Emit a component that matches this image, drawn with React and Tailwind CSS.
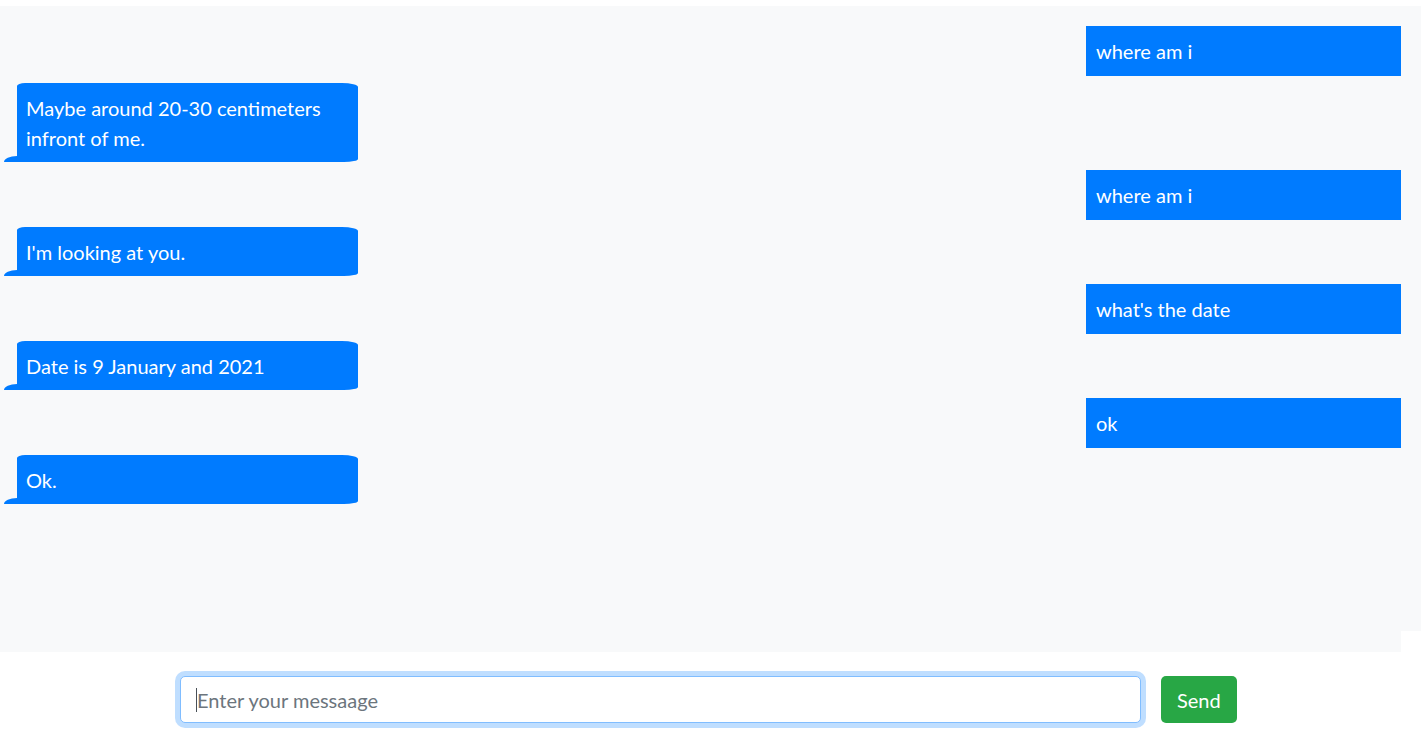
import { useState } from "react";

const messages = [
  { id: 1, from: "user", text: "where am i" },
  { id: 2, from: "bot", text: "Maybe around 20-30 centimeters infront of me." },
  { id: 3, from: "user", text: "where am i" },
  { id: 4, from: "bot", text: "I'm looking at you." },
  { id: 5, from: "user", text: "what's the date" },
  { id: 6, from: "bot", text: "Date is 9 January and 2021" },
  { id: 7, from: "user", text: "ok" },
  { id: 8, from: "bot", text: "Ok." },
];

const font = { fontFamily: '"Lato", "Open Sans", sans-serif' };

const App = () => {
  const [text, setText] = useState("");

  return (
    <div className="min-h-screen bg-white pt-[6px] font-['Lato',sans-serif]">

      {/* Chat area */}
      <div className="w-[1401px] h-[646px] bg-[#f8f9fa]">
        <div className="w-[1421px] h-[625px] bg-[#f8f9fa] pt-[20px] flex flex-col">

          {messages.map((msg) =>
            msg.from === "user" ? (
              <div key={msg.id} className="flex justify-end pr-[20px] mb-[7px]">
                <div className="w-[315px] bg-[#007bff] text-white text-[20px] leading-[30px] px-[10px] py-[10px]">
                  {msg.text}
                </div>
              </div>
            ) : (
              <div key={msg.id} className="flex pl-[17px] mb-[8px]">
                <div className="relative w-[341px] bg-[#007bff] text-white text-[20px] leading-[30px] pl-[9px] pr-[10px] pt-[10px] pb-[9px] rounded-tl-[8px_3px] rounded-tr-[16px_4px] rounded-br-[14px_3px]">
                  {msg.text}
                  <span className="absolute left-[-13px] bottom-0 w-[14px] h-[6px] bg-[#007bff] rounded-tl-[13px_6px]"></span>
                </div>
              </div>
            )
          )}

        </div>
      </div>

      {/* Input row */}
      <div className="flex items-center pl-[180px] pt-[24px] gap-[20px]">
        <div className="relative">
          <input
            type="text"
            value={text}
            onChange={(e) => setText(e.target.value)}
            placeholder="Enter your messaage"
            className="w-[961px] h-[47px] px-[16px] text-[20px] text-[#495057] placeholder:text-[#6c757d] bg-white border border-[#80bdff] rounded-[5px] shadow-[0_0_0_5px_rgba(0,123,255,0.25)] outline-none"
            style={font}
          />
          <span className="absolute left-[16px] top-[12px] w-px h-[24px] bg-[#495057]"></span>
        </div>
        <button className="h-[47px] px-[16px] bg-[#28a745] hover:bg-[#218838] text-white text-[20px] rounded-[5px]">
          Send
        </button>
      </div>

    </div>
  );
};

export default App;
